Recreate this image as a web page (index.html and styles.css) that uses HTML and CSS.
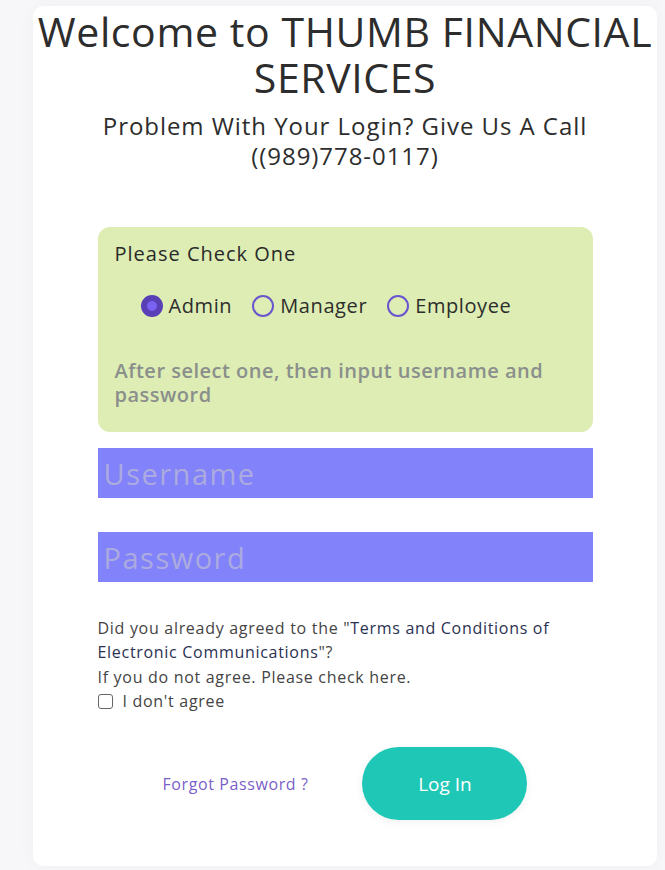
FILE: index.html
```html
<!DOCTYPE html>
<html lang="en">
<head>
<meta charset="utf-8">
<title>Thumb Financial Services - Login</title>
<link rel="stylesheet" href="styles.css">
</head>
<body>
<div class="card">
  <h1 class="title">Welcome to THUMB FINANCIAL SERVICES</h1>
  <p class="sub">Problem With Your Login? Give Us A Call<br>((989)778-0117)</p>
  <form class="form">
    <div class="role-box">
      <div class="role-head">Please Check One</div>
      <div class="role-row">
        <label class="role"><input type="radio" name="role" class="radio" checked><span>Admin</span></label>
        <label class="role"><input type="radio" name="role" class="radio"><span>Manager</span></label>
        <label class="role"><input type="radio" name="role" class="radio"><span>Employee</span></label>
      </div>
      <div class="role-note">After select one, then input username and password</div>
    </div>
    <input class="field" type="text" placeholder="Username">
    <input class="field" type="password" placeholder="Password">
    <div class="terms">
      <p class="terms-line">Did you already agreed to the "<span class="terms-link">Terms and Conditions of Electronic Communications</span>"?</p>
      <p class="terms-line">If you do not agree. Please check here.</p>
      <label class="agree"><input type="checkbox" class="check"><span>I don't agree</span></label>
    </div>
    <div class="actions">
      <a class="forgot" href="#">Forgot Password ?</a>
      <button type="button" class="login">Log In</button>
    </div>
  </form>
</div>
</body>
</html>
```

FILE: styles.css
```css
* { box-sizing: border-box; }

html, body { margin: 0; }

body {
  background: #f7f7f9;
  padding: 6px 8px 4px 33px;
  font-family: "Open Sans", "DejaVu Sans", sans-serif;
  color: #2d2d2d;
}

.card {
  background: #ffffff;
  border-radius: 10px;
  box-shadow: 0 0 18px rgba(0, 0, 0, 0.035);
  height: 860px;
  padding: 2px 0 0;
  display: flex;
  flex-direction: column;
  align-items: center;
}

.title {
  margin: 0;
  font-size: 41px;
  line-height: 46px;
  font-weight: 400;
  letter-spacing: 0.6px;
  text-align: center;
  color: #2d2d2d;
  width: 624px;
}

.sub {
  margin: 11px 0 0;
  font-size: 24px;
  line-height: 30px;
  letter-spacing: 0.95px;
  text-align: center;
  color: #2d2d2d;
}

.form {
  width: 495px;
  margin-top: 56px;
  display: flex;
  flex-direction: column;
}

.role-box {
  background: #ddedb4;
  border-radius: 12px;
  padding: 13px 17px 25px;
}

.role-head {
  font-size: 20px;
  line-height: 28px;
  font-weight: 500;
  letter-spacing: 1px;
  color: #2a2a2a;
}

.role-row {
  display: flex;
  gap: 20px;
  margin: 23px 0 0 26px;
}

.role {
  display: flex;
  align-items: center;
  gap: 6px;
  font-size: 20px;
  line-height: 30px;
  letter-spacing: 0.6px;
  color: #2d2d2d;
}

.radio {
  appearance: none;
  margin: 0;
  width: 22px;
  height: 22px;
  border-radius: 50%;
  border: 2px solid #6a55cf;
  background: transparent;
}

.radio:checked {
  border: 6px solid #5a40b6;
  background: #7a62f2;
}

.role-note {
  margin-top: 38px;
  font-size: 20px;
  line-height: 24px;
  font-weight: 600;
  letter-spacing: 0.5px;
  color: #8b8f8c;
}

.field {
  display: block;
  width: 100%;
  height: 50px;
  border: 0;
  outline: 0;
  background: #8282fb;
  padding: 0 6px;
  font-family: inherit;
  font-size: 29px;
  letter-spacing: 1.5px;
  color: #ffffff;
  margin-top: 16px;
}

.field + .field { margin-top: 34px; }

.field::placeholder { color: #ababdf; }

.terms {
  margin-top: 34px;
  font-size: 16px;
  line-height: 24px;
  letter-spacing: 0.7px;
  color: #444444;
}

.terms-line { margin: 0; }

.terms-line + .terms-line { margin-top: 1px; }

.terms-link { color: #2b3152; }

.agree {
  display: flex;
  align-items: center;
  gap: 10px;
}

.check {
  appearance: none;
  margin: 0;
  width: 15px;
  height: 15px;
  border: 1.5px solid #666666;
  border-radius: 3px;
  background: #ffffff;
}

.actions {
  margin-top: 34px;
  display: flex;
  justify-content: center;
  align-items: center;
  gap: 54px;
}

.forgot {
  font-size: 16px;
  letter-spacing: 0.6px;
  color: #7a5fc9;
  text-decoration: none;
}

.login {
  width: 165px;
  height: 73px;
  border: 0;
  border-radius: 37px;
  background: #1fc8b6;
  color: #ffffff;
  font-family: inherit;
  font-size: 19px;
  box-shadow: 0 2px 10px rgba(0, 0, 0, 0.06);
}
```
